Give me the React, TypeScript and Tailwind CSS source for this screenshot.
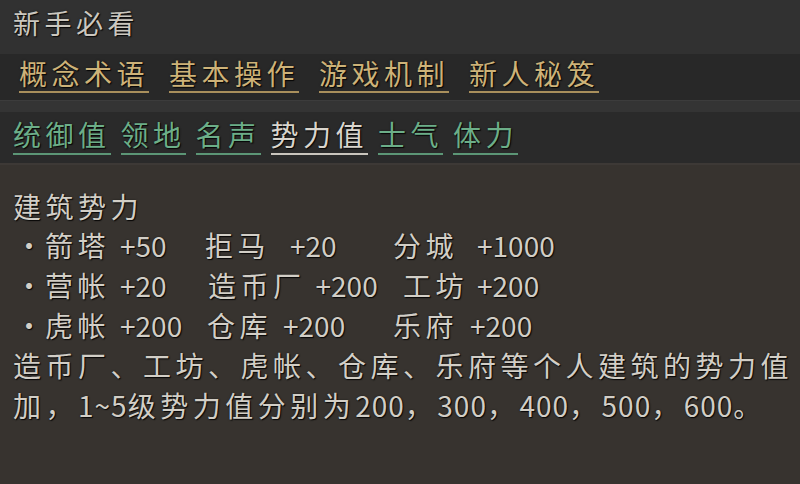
import React from "react";

const CJK = /([\u3000-\u303f\u3400-\u9fff\uff00-\uffef]+)/;

// split text so only the CJK runs get the wide spacing of the game font
function Txt({ children, latin }: { children: string; latin?: string }) {
  const parts = children.split(CJK).filter((p) => p.length > 0);
  return (
    <>
      {parts.map((p, i) =>
        CJK.test(p) ? (
          <span key={i} className="tracking-[4.5px]">
            {p}
          </span>
        ) : (
          <span key={i} className={latin}>
            {p}
          </span>
        )
      )}
    </>
  );
}

const goldTabs = ["概念术语", "基本操作", "游戏机制", "新人秘笈"];
const greenTabs = ["统御值", "领地", "名声", "势力值", "士气", "体力"];

function Entry({ label, gap, value, width }: { label: string; gap: string; value: string; width?: string }) {
  return (
    <span className={`flex shrink-0 whitespace-nowrap ${width ?? ""}`}>
      <Txt>{label}</Txt>
      <span className={gap}>{value}</span>
    </span>
  );
}

export default function App() {
  const font = "font-['Noto_Sans_CJK_SC','Noto_Sans',sans-serif]";
  const shadow = "[text-shadow:1px_1px_1px_rgba(0,0,0,0.85),0_0_2px_rgba(0,0,0,0.5)]";

  return (
    <div className={`flex h-[484px] w-[800px] flex-col overflow-hidden bg-[#37332f] ${font} ${shadow}`}>
      <div className="flex h-[54px] shrink-0 items-center bg-[#313131] pl-[13px] pb-[10px]">
        <span className="text-[27px] leading-none text-[#cbc7bf] tracking-[4.5px]">新手必看</span>
      </div>

      <div className="flex h-[46px] shrink-0 items-start gap-[20px] bg-[#282828] pl-[19px] pt-[4px]">
        {goldTabs.map((t) => (
          <span
            key={t}
            className="border-b-[2px] border-[#a98f5c] pb-[2px] text-[28px] leading-[31px] text-[#cdb278]"
          >
            <Txt>{t}</Txt>
          </span>
        ))}
      </div>

      <div className="h-[12px] shrink-0 border-t border-[#3c3c3c] bg-[#343434]" />

      <div className="flex h-[51px] shrink-0 items-start gap-[10px] bg-[#2a2a2a] pl-[13px] pt-[7px]">
        {greenTabs.map((t) => (
          <span
            key={t}
            className={`border-b-[2px] pb-[3px] text-[28px] leading-[31px] ${
              t === "势力值" ? "border-[#c9c5bd] text-[#d9d5cd]" : "border-[#5c9676] text-[#6cae88]"
            }`}
          >
            <Txt>{t}</Txt>
          </span>
        ))}
      </div>

      <div className="flex flex-col border-t-[2px] border-[#3d3936] pl-[13px] pt-[22px] text-[28px] leading-[40px] text-[#d2cec6]">
        <div className="h-[38px] leading-[38px]">
          <Txt>建筑势力</Txt>
        </div>

        <div className="flex">
          <span className="w-[32px] shrink-0 text-center">·</span>
          <Entry label="箭塔" gap="ml-[10px]" value="+50" width="w-[160px]" />
          <Entry label="拒马" gap="ml-[20px]" value="+20" width="w-[188px]" />
          <Entry label="分城" gap="ml-[19px]" value="+1000" />
        </div>

        <div className="flex">
          <span className="w-[32px] shrink-0 text-center">·</span>
          <Entry label="营帐" gap="ml-[10px]" value="+20" width="w-[163px]" />
          <Entry label="造币厂" gap="ml-[10px]" value="+200" width="w-[195px]" />
          <Entry label="工坊" gap="ml-[9px]" value="+200" />
        </div>

        <div className="flex">
          <span className="w-[32px] shrink-0 text-center">·</span>
          <Entry label="虎帐" gap="ml-[10px]" value="+200" width="w-[162px]" />
          <Entry label="仓库" gap="ml-[11px]" value="+200" width="w-[186px]" />
          <Entry label="乐府" gap="ml-[12px]" value="+200" />
        </div>

        <div className="whitespace-nowrap">
          <Txt>造币厂、工坊、虎帐、仓库、乐府等个人建筑的势力值</Txt>
        </div>
        <div className="whitespace-nowrap">
          <Txt latin="tracking-[1px]">加，1~5级势力值分别为200，300，400，500，600。</Txt>
        </div>
      </div>
    </div>
  );
}
